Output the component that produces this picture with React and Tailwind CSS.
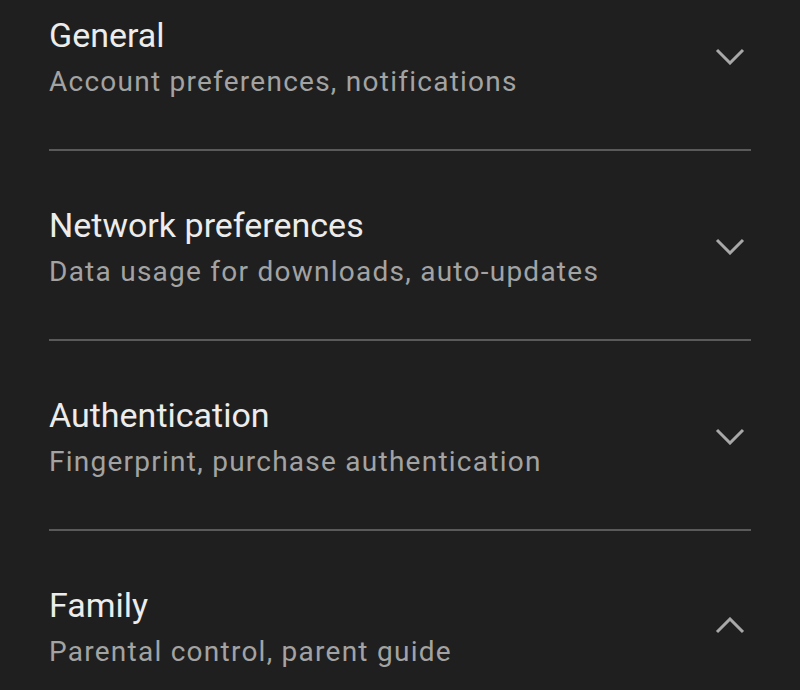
import React from "react";

const items = [
  { title: "General", sub: "Account preferences, notifications", open: false },
  { title: "Network preferences", sub: "Data usage for downloads, auto-updates", open: false },
  { title: "Authentication", sub: "Fingerprint, purchase authentication", open: false },
  { title: "Family", sub: "Parental control, parent guide", open: true },
];

function Chevron({ up }) {
  return (
    <svg width="30" height="18" viewBox="0 0 30 18" className="shrink-0">
      <polyline
        points={up ? "2,15 15,2 28,15" : "2,3 15,16 28,3"}
        fill="none"
        stroke="#a8a8a8"
        strokeWidth="3"
      />
    </svg>
  );
}

export default function App() {
  return (
    <div className="w-[800px] h-[690px] overflow-hidden bg-[#1f1f1f] px-[49px]" style={{ fontFamily: "Roboto, 'Noto Sans', sans-serif" }}>
      {items.map((it, i) => (
        <div key={it.title}>
          <div className={`flex items-center justify-between ${i === 0 ? "pt-[15px]" : "pt-[54px]"} pb-[50px]`}>
            <div className="flex flex-col gap-[10px]">
              <div className="text-[34px] leading-[40px] text-[#ececec]">{it.title}</div>
              <div className="text-[28px] leading-[34px] tracking-[1.25px] text-[#a3a3a3]">{it.sub}</div>
            </div>
            <div className="mr-[6px] mt-[-2px]">
              <Chevron up={it.open} />
            </div>
          </div>
          {i < items.length - 1 && <div className="h-[2px] bg-[#5a5a5a]" />}
        </div>
      ))}
    </div>
  );
}
